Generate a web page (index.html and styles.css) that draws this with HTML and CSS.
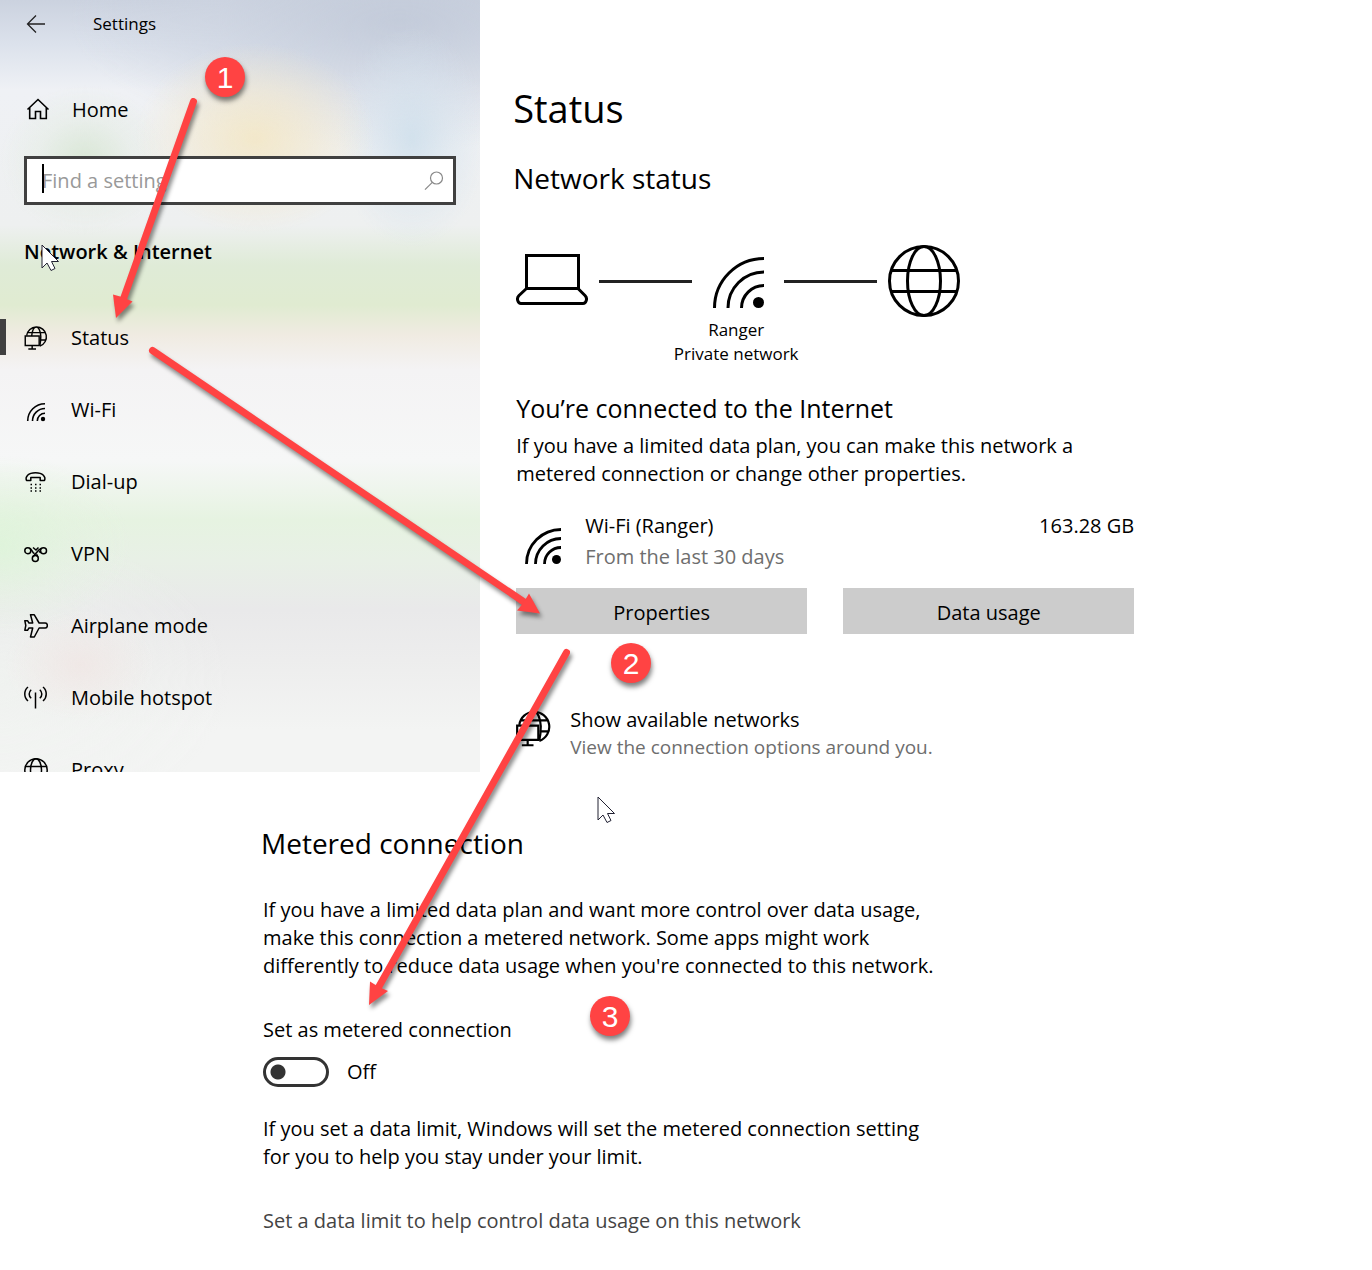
FILE: index.html
```html
<!DOCTYPE html>
<html lang="en">
  <head>
    <meta charset="UTF-8" />
    <title>Settings</title>
    <link rel="stylesheet" href="styles.css">
  </head>
  <body>
    <!-- shared icons -->
    <svg class="symbols" aria-hidden="true">
      <symbol id="wifi" viewBox="0 0 51 51">
        <path d="M1.5 51A49.5 49.5 0 0 1 51 1.5M15 51a36 36 0 0 1 36-36M28.500 51a22.500 22.500 0 0 1 22.500-22.500" fill="none" stroke="currentColor" stroke-width="3" />
        <circle cx="45.500" cy="45.500" r="5.500" fill="currentColor" />
      </symbol>
      <symbol id="globe" viewBox="0 0 72 72">
        <g fill="none" stroke="currentColor" stroke-width="3">
          <circle cx="36" cy="36" r="34.500" />
          <ellipse cx="36" cy="36" rx="16.500" ry="34.500" />
          <path d="M4 25.500h64M4 46.500h64" />
        </g>
      </symbol>
      <symbol id="network" viewBox="0 0 24 25">
        <g fill="none" stroke="currentColor" stroke-width="1.500">
          <path d="M2.300 10A10.300 10.300 0 1 1 16 21M7.500 10.500C8 5.500 9.800 1 12.300 1S16.800 5.500 17 11c0 3.500-.3 6.500-1 9.500M3.500 6.900h17.700M16 14.500h5.700" />
          <path d="M.8 10.500h14.500v9.800H.8zM8 20.500v3.500M4 24h8" />
        </g>
      </symbol>
      <symbol id="pointer" viewBox="0 0 19 28">
        <path d="M1 1v23l5-5 4 7.500 4-2-3.500-7h7z" fill="#fff" stroke="#223" stroke-width="1" />
      </symbol>
    </svg>

    <div class="window">
      <aside class="sidebar">
        <header class="titlebar">
          <button class="back" aria-label="Back">
            <svg width="20" height="20" viewBox="0 0 20 20" fill="none" stroke="#222" stroke-width="1.300"><path d="M19 10H2M10 1.500L1.500 10l8.500 8.500" /></svg>
          </button>
          <span class="app-name">Settings</span>
        </header>
        <a class="nav-item home" href="#">
          <svg class="nav-icon" viewBox="0 0 24 24" fill="none" stroke="currentColor" stroke-width="1.600"><path d="M1.500 11.500L12 1.500l10.500 10M3.700 9.500V20.500h5.800v-7h5v7h5.800V9.500" /></svg>
          Home
        </a>
        <div class="search">
          <input type="text" placeholder="Find a setting" aria-label="Find a setting" />
          <span class="caret"></span>
          <svg width="20" height="20" viewBox="0 0 20 20" fill="none" stroke="#888" stroke-width="1.200"><circle cx="12.500" cy="7" r="6" /><path d="M8.300 11.300L1 18.700" /></svg>
        </div>
        <h2 class="category">Network &amp; Internet</h2>
        <nav>
          <a class="nav-item active" href="#">
            <svg class="nav-icon"><use href="#network" /></svg>Status
          </a>
          <a class="nav-item" href="#">
            <svg class="nav-icon" viewBox="0 0 24 24"><g fill="none" stroke="currentColor" stroke-width="1.600"><path d="M3.700 23A17.300 17.300 0 0 1 21 5.700M8.500 23A12.500 12.500 0 0 1 21 10.500M13.300 23A7.700 7.700 0 0 1 21 15.300" /></g><circle cx="19" cy="21" r="2.200" fill="currentColor" /></svg>Wi-Fi
          </a>
          <a class="nav-item" href="#">
            <svg class="nav-icon" viewBox="0 0 24 24"><path d="M2.500 10.500C1 7 4 2.700 11.500 2.700S22 7 20.500 10.500h-4.300V7.500H6.800v3z" fill="none" stroke="currentColor" stroke-width="1.500" stroke-linejoin="round" /><path d="M6.500 14.500h11M6.500 18h11M6.500 21h11" stroke="currentColor" stroke-width="1.300" stroke-dasharray="1.500 3" /></svg>Dial-up
          </a>
          <a class="nav-item" href="#">
            <svg class="nav-icon" viewBox="0 0 24 24" fill="none" stroke="currentColor" stroke-width="1.500"><circle cx="3.800" cy="8.700" r="3" /><circle cx="19.500" cy="8.700" r="3" /><circle cx="11.300" cy="16.500" r="3" /><path d="M5.500 6.200c3 1 2.500 4.800 5 5.300M9 5.500l3 2.500 2.500-2.500M17.500 6.300c-4 1.500-5.500 6-8.700 8.300M13.700 15c-.2-1.200-.5-2-1.200-2.700M17 10.500l-2-1" /></svg>VPN
          </a>
          <a class="nav-item" href="#">
            <svg class="nav-icon" viewBox="0 0 24 24" fill="none" stroke="currentColor" stroke-width="1.500" stroke-linejoin="round"><path d="M6.500.8h3.800l4.800 8.200h6.200c2.700 0 2.700 5 0 5h-6.200l-4.800 9H6.500L8.700 14H5L3.500 16.300H.8L1.800 11.500.8 6.700h2.700L5 9h3.700z" /></svg>Airplane mode
          </a>
          <a class="nav-item" href="#">
            <svg class="nav-icon" viewBox="0 0 24 24" fill="none" stroke="currentColor" stroke-width="1.500"><path d="M4 1C-.3 4.500-.3 11.500 4 15M19 1c4.300 3.500 4.300 10.500 0 14M7.200 3.700c-2.700 2.300-2.700 6.300 0 8.600M15.800 3.700c2.700 2.300 2.700 6.300 0 8.600M11.500 6.500v16" /></svg>Mobile hotspot
          </a>
          <a class="nav-item" href="#">
            <svg class="nav-icon" viewBox="0 0 24 24" fill="none" stroke="currentColor" stroke-width="1.500"><circle cx="12" cy="12" r="11.200" /><ellipse cx="12" cy="12" rx="5.500" ry="11.200" /><path d="M1.500 8.500h21M1.500 15.500h21" /></svg>Proxy
          </a>
        </nav>
      </aside>

      <main class="content">
        <h1>Status</h1>
        <h2>Network status</h2>

        <div class="diagram">
          <svg width="72" height="72" viewBox="0 0 72 72" fill="none" stroke="#000" stroke-width="3"><path d="M10.500 43.500v-33h52v33zM10.500 43.500L3 50.500c-3 3-1 8 2 8h62c3 0 5-5 2-8l-7-7" /></svg>
          <span class="wire"></span>
          <svg class="diagram-wifi" width="51" height="51"><use href="#wifi" /></svg>
          <span class="wire"></span>
          <svg width="72" height="72"><use href="#globe" /></svg>
        </div>
        <p class="network-name">Ranger<br>Private network</p>

        <h3>You’re connected to the Internet</h3>
        <p class="plan">If you have a limited data plan, you can make this network a<br>metered connection or change other properties.</p>

        <div class="usage">
          <svg width="36" height="36" viewBox="0 0 36 36"><path d="M1.500 36A34.500 34.500 0 0 1 36 1.500M10.500 36A25.500 25.500 0 0 1 36 10.500M19.500 36A16.500 16.500 0 0 1 36 19.500" fill="none" stroke="#000" stroke-width="2.800" /><circle cx="31.500" cy="31.500" r="4.500" /></svg>
          <div class="usage-text">
            <div>Wi-Fi (Ranger)</div>
            <div class="muted">From the last 30 days</div>
          </div>
          <div class="amount">163.28 GB</div>
        </div>
        <div class="buttons">
          <button>Properties</button>
          <button>Data usage</button>
        </div>

        <a class="available" href="#">
          <svg width="35" height="37"><use href="#network" /></svg>
          <span class="available-text">Show available networks<small>View the connection options around you.</small></span>
        </a>
      </main>
    </div>

    <section class="metered">
      <h2>Metered connection</h2>
      <p>If you have a limited data plan and want more control over data usage,<br>make this connection a metered network. Some apps might work<br>differently to reduce data usage when you're connected to this network.</p>
      <label class="toggle-label" for="meteredToggle">Set as metered connection</label>
      <div class="toggle-row">
        <input type="checkbox" id="meteredToggle" class="toggle" />
        <span>Off</span>
      </div>
      <p>If you set a data limit, Windows will set the metered connection setting<br>for you to help you stay under your limit.</p>
      <a class="limit-link" href="#">Set a data limit to help control data usage on this network</a>
    </section>

    <!-- walkthrough arrows and step numbers -->
    <svg class="arrows" width="1150" height="1100" viewBox="0 0 1150 1100" aria-hidden="true">
      <g stroke="#ff4343" stroke-width="7" stroke-linecap="round">
        <path d="M193.500 101.500L122 303" />
        <path d="M152.500 350.500L527 604" />
        <path d="M566.500 652.500L377 990" />
      </g>
      <g fill="#ff4343">
        <path d="M116 318L113 294.500l9 2.500 10.500 4.500z" />
        <path d="M540 613.500l-23-3 6-7 6-10z" />
        <path d="M369 1005l1-23.500 8 5 10 4.500z" />
      </g>
    </svg>
    <span class="step step-1">1</span>
    <span class="step step-2">2</span>
    <span class="step step-3">3</span>
    <svg class="pointer pointer-1"><use href="#pointer" /></svg>
    <svg class="pointer pointer-2"><use href="#pointer" /></svg>
  </body>
</html>
```

FILE: styles.css
```css
* {
  box-sizing: border-box;
}
body {
  position: relative;
  margin: 0;
  background: #fff;
  color: #000;
  font-family: "Open Sans", "Noto Sans", sans-serif;
  font-size: 20px;
  line-height: 28px;
}
h1, h2, h3, p {
  margin: 0;
  font-weight: 400;
}
a {
  color: inherit;
  text-decoration: none;
}
button, input {
  font: inherit;
  color: inherit;
}
svg {
  display: block;
  flex: none;
}
.symbols {
  position: absolute;
  width: 0;
  height: 0;
}
.window {
  display: flex;
}

/* sidebar */
.sidebar {
  flex: 0 0 35%;
  height: 772px;
  overflow: hidden;
  background:
    radial-gradient(ellipse 120px 95px at 255px 138px, rgba(243, 231, 198, 0.9), rgba(243, 232, 204, 0.6) 45%, rgba(243, 235, 215, 0)),
    radial-gradient(ellipse 75px 110px at 412px 138px, rgba(208, 224, 236, 0.9), rgba(214, 227, 238, 0.5) 50%, rgba(220, 230, 240, 0)),
    radial-gradient(ellipse 85px 75px at 85px 160px, rgba(215, 230, 211, 0.9), rgba(225, 235, 222, 0.4) 55%, rgba(230, 238, 228, 0)),
    radial-gradient(ellipse 330px 130px at 400px 20px, rgba(194, 202, 217, 0.9), rgba(204, 211, 224, 0.6) 55%, rgba(220, 226, 236, 0)),
    radial-gradient(ellipse 130px 90px at 0 545px, rgba(222, 244, 218, 0.9), rgba(226, 243, 222, 0.4) 55%, rgba(230, 240, 228, 0)),
    radial-gradient(ellipse 75px 55px at 80px 665px, rgba(240, 230, 228, 0.8), rgba(238, 232, 230, 0)),
    radial-gradient(ellipse 230px 150px at 0 680px, rgba(240, 243, 240, 0.8), rgba(240, 243, 240, 0)),
    linear-gradient(#cbd2df 0, #dce2ec 45px, #eff1f5 90px, #eef0f0 225px, #dfebd7 265px, #e0ebd1 305px, #f0ebe2 335px, #f4f3f4 370px, #f6f7f7 460px, #e6f3e1 520px, #e8f0e6 560px, #e9e9ea 610px, #ededed 660px, #f3f4f3 730px);
}
.titlebar {
  display: flex;
  align-items: center;
  height: 48px;
  padding-left: 26px;
  font-size: 17px;
}
.back {
  width: 20px;
  padding: 0;
  border: 0;
  background: none;
}
.app-name {
  margin-left: 47px;
}
.nav-item {
  position: relative;
  display: flex;
  align-items: center;
  gap: 23px;
  height: 72px;
  padding-left: 24px;
}
.nav-icon {
  width: 24px;
  height: 24px;
}
.home {
  height: 48px;
  margin: 38px 0 22px;
  padding-left: 26px;
  gap: 22px;
}
.active::before {
  content: "";
  position: absolute;
  left: 0;
  top: 17px;
  width: 6px;
  height: 36px;
  background: #404040;
}
.search {
  position: relative;
  display: flex;
  align-items: center;
  height: 49px;
  margin: 0 24px;
  padding: 0 9px 0 15px;
  border: 3px solid #404040;
  background: #fff;
}
.search input {
  flex: 1;
  min-width: 0;
  padding: 0;
  border: 0;
  outline: 0;
  background: none;
}
.search input::placeholder {
  color: #999;
  opacity: 1;
}
.caret {
  position: absolute;
  left: 15px;
  top: 5px;
  width: 2px;
  height: 29px;
  background: #000;
}
.category {
  margin: 33px 24px 36px;
  font-size: 20px;
  font-weight: 600;
  line-height: 28px;
}

/* status page */
.content {
  flex: 1;
  max-width: 690px;
  padding: 80px 36px 0;
}
h1 {
  margin-left: -3px;
  font-size: 38px;
  line-height: 56px;
}
h2 {
  font-size: 28px;
  line-height: 40px;
}
.content h2 {
  margin: 22px 0 47px -3px;
}
.diagram {
  display: flex;
  align-items: center;
  justify-content: space-between;
  max-width: 444px;
}
.diagram-wifi {
  margin: 2px 10px 0;
}
.wire {
  width: 93px;
  height: 3px;
  background: #222;
}
.network-name {
  max-width: 440px;
  margin-top: 1px;
  font-size: 17px;
  line-height: 24px;
  text-align: center;
}
h3 {
  margin-top: 23px;
  font-size: 25px;
  line-height: 38px;
}
.plan {
  margin-top: 5px;
}
.usage {
  display: flex;
  align-items: flex-end;
  gap: 24px;
  margin-top: 22px;
  padding-left: 9px;
  line-height: 31px;
}
.usage svg {
  margin-bottom: 8px;
}
.amount {
  align-self: flex-start;
  margin-left: auto;
}
.muted, small {
  color: #6e6e6e;
}
.buttons {
  display: flex;
  gap: 36px;
  margin-top: 16px;
}
.buttons button {
  flex: 1;
  height: 46px;
  padding: 4px 0 0;
  border: 0;
  background: #ccc;
}
.available {
  display: flex;
  align-items: flex-start;
  gap: 19px;
  margin-top: 72px;
}
.available svg {
  margin-top: 4px;
}
small {
  display: block;
  font-size: 19px;
  line-height: 26px;
}

/* metered connection */
.metered {
  margin: 51px 24px 36px 263px;
}
.metered h2 {
  margin: 0 0 33px -2px;
}
.toggle-label {
  display: block;
  margin: 36px 0 13px;
}
.toggle-row {
  display: flex;
  align-items: center;
  gap: 18px;
  margin-bottom: 28px;
}
.toggle {
  appearance: none;
  width: 66px;
  height: 30px;
  margin: 0;
  border: 3px solid #333;
  border-radius: 15px;
  background: radial-gradient(circle at 12px 12px, #333 7px, transparent 8px);
}
.limit-link {
  display: block;
  margin-top: 36px;
  color: #444;
}

/* annotations on top of the page */
.arrows {
  position: absolute;
  left: 0;
  top: 0;
  pointer-events: none;
  filter: drop-shadow(2px 4px 2px rgba(0, 0, 0, 0.45));
}
.step {
  position: absolute;
  width: 40px;
  height: 40px;
  border-radius: 50%;
  background: #ff4343;
  box-shadow: 1px 4px 5px rgba(0, 0, 0, 0.5);
  color: #fff;
  font-family: "Liberation Sans", Arial, sans-serif;
  font-size: 30px;
  line-height: 41px;
  text-align: center;
}
.step-1 {
  left: 205px;
  top: 57px;
}
.step-2 {
  left: 611px;
  top: 643px;
}
.step-3 {
  left: 590px;
  top: 996px;
}
.pointer {
  position: absolute;
  width: 19px;
  height: 28px;
}
.pointer-1 {
  left: 41px;
  top: 244px;
}
.pointer-2 {
  left: 597px;
  top: 796px;
}
```
